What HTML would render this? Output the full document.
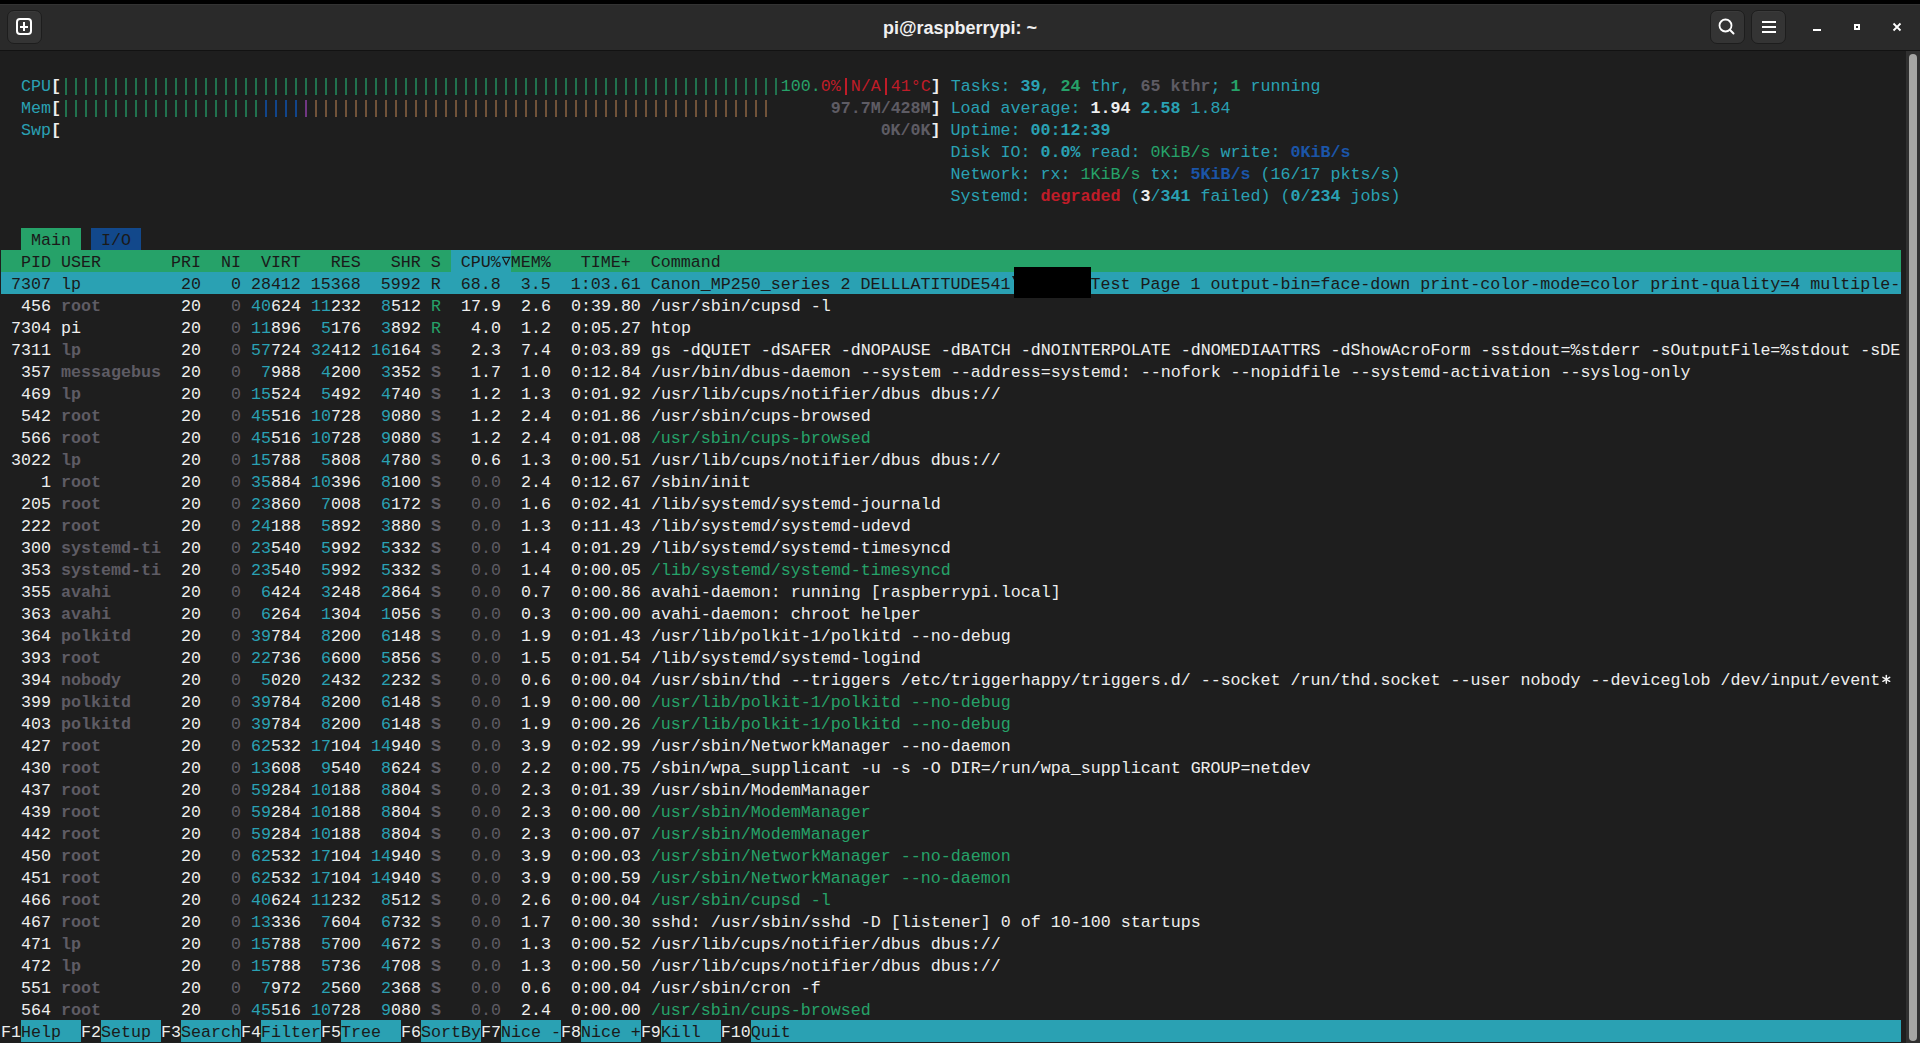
<!DOCTYPE html>
<html><head><meta charset="utf-8">
<style>
html,body{margin:0;padding:0;}
body{width:1920px;height:1043px;background:#1e1e1e;position:relative;overflow:hidden;font-family:"Liberation Mono",monospace;}
#topline{position:absolute;left:0;top:0;width:1920px;height:4px;background:#000;}
#titlebar{position:absolute;left:0;top:4px;width:1920px;height:46px;background:#2a2a2a;box-shadow:inset 0 1px 0 #333;}
#titlesep{position:absolute;left:0;top:50px;width:1920px;height:1px;background:#121212;}
.btn{position:absolute;top:10px;width:33px;height:32px;border-radius:7px;background:#343434;border:1px solid #1d1d1d;box-shadow:inset 0 1px 0 #3a3a3a;}
#title{position:absolute;left:0;top:5px;width:1920px;height:46px;line-height:46px;text-align:center;color:#f0f0f0;font-family:"Liberation Sans",sans-serif;font-weight:bold;font-size:18px;}
#sbtrack{position:absolute;left:1906px;top:51px;width:14px;height:992px;background:#303030;}
#sbthumb{position:absolute;left:1909px;top:54px;width:8px;height:987px;border-radius:4px;background:#a5a5a3;}
.bg{position:absolute;height:22px;}
.bar{position:absolute;width:2px;height:17px;}
.r{position:absolute;left:1px;height:22px;line-height:22px;font-size:16.667px;white-space:pre;}
#redact{position:absolute;left:1014px;top:267px;width:77px;height:31px;background:#000;}
</style></head><body>
<div id="topline"></div>
<div id="titlebar"></div>
<div id="titlesep"></div>
<div class="btn" style="left:7px"></div>
<svg style="position:absolute;left:0;top:0" width="60" height="50">
 <rect x="17" y="19" width="14" height="15" rx="3" ry="3" fill="none" stroke="#ffffff" stroke-width="2"/>
 <rect x="20" y="26" width="8" height="2" fill="#fff"/>
 <rect x="23" y="22" width="2" height="9" fill="#fff"/>
</svg>
<div id="title">pi@raspberrypi: ~</div>
<div class="btn" style="left:1710px"></div>
<div class="btn" style="left:1751px"></div>
<svg style="position:absolute;left:1700px;top:0" width="220" height="50">
 <circle cx="25.5" cy="25.5" r="6" fill="none" stroke="#fff" stroke-width="1.8"/>
 <line x1="29.8" y1="29.8" x2="33.5" y2="33.5" stroke="#fff" stroke-width="2" stroke-linecap="round"/>
 <rect x="62" y="21" width="14" height="2" fill="#fff"/>
 <rect x="62" y="26" width="14" height="2" fill="#fff"/>
 <rect x="62" y="31" width="14" height="2" fill="#fff"/>
 <rect x="113" y="29" width="8" height="2" fill="#fff"/>
 <rect x="155" y="25" width="4" height="4" fill="none" stroke="#fff" stroke-width="2"/>
 <path d="M193.5 23.5 L200.5 30.5 M200.5 23.5 L193.5 30.5" stroke="#fff" stroke-width="1.8"/>
</svg>
<div id="sbtrack"></div>
<div id="sbthumb"></div>
<div class="bg" style="left:21px;top:228px;width:60px;background:#26a269"></div>
<div class="bg" style="left:91px;top:228px;width:50px;background:#12488b"></div>
<div class="bg" style="left:1px;top:250px;width:1900px;background:#26a269"></div>
<div class="bg" style="left:451px;top:250px;width:60px;background:#2aa1b3"></div>
<div class="bg" style="left:1px;top:272px;width:1900px;background:#2aa1b3"></div>
<div class="bg" style="left:21px;top:1020px;width:60px;background:#2aa1b3"></div>
<div class="bg" style="left:101px;top:1020px;width:60px;background:#2aa1b3"></div>
<div class="bg" style="left:181px;top:1020px;width:60px;background:#2aa1b3"></div>
<div class="bg" style="left:261px;top:1020px;width:60px;background:#2aa1b3"></div>
<div class="bg" style="left:341px;top:1020px;width:60px;background:#2aa1b3"></div>
<div class="bg" style="left:421px;top:1020px;width:60px;background:#2aa1b3"></div>
<div class="bg" style="left:501px;top:1020px;width:60px;background:#2aa1b3"></div>
<div class="bg" style="left:581px;top:1020px;width:60px;background:#2aa1b3"></div>
<div class="bg" style="left:661px;top:1020px;width:60px;background:#2aa1b3"></div>
<div class="bg" style="left:751px;top:1020px;width:1150px;background:#2aa1b3"></div>
<div class="bar" style="left:65px;top:78px;background:#21724e"></div>
<div class="bar" style="left:75px;top:78px;background:#21724e"></div>
<div class="bar" style="left:85px;top:78px;background:#21724e"></div>
<div class="bar" style="left:95px;top:78px;background:#21724e"></div>
<div class="bar" style="left:105px;top:78px;background:#21724e"></div>
<div class="bar" style="left:115px;top:78px;background:#21724e"></div>
<div class="bar" style="left:125px;top:78px;background:#21724e"></div>
<div class="bar" style="left:135px;top:78px;background:#21724e"></div>
<div class="bar" style="left:145px;top:78px;background:#21724e"></div>
<div class="bar" style="left:155px;top:78px;background:#21724e"></div>
<div class="bar" style="left:165px;top:78px;background:#21724e"></div>
<div class="bar" style="left:175px;top:78px;background:#21724e"></div>
<div class="bar" style="left:185px;top:78px;background:#21724e"></div>
<div class="bar" style="left:195px;top:78px;background:#21724e"></div>
<div class="bar" style="left:205px;top:78px;background:#21724e"></div>
<div class="bar" style="left:215px;top:78px;background:#21724e"></div>
<div class="bar" style="left:225px;top:78px;background:#21724e"></div>
<div class="bar" style="left:235px;top:78px;background:#21724e"></div>
<div class="bar" style="left:245px;top:78px;background:#21724e"></div>
<div class="bar" style="left:255px;top:78px;background:#21724e"></div>
<div class="bar" style="left:265px;top:78px;background:#21724e"></div>
<div class="bar" style="left:275px;top:78px;background:#21724e"></div>
<div class="bar" style="left:285px;top:78px;background:#21724e"></div>
<div class="bar" style="left:295px;top:78px;background:#21724e"></div>
<div class="bar" style="left:305px;top:78px;background:#21724e"></div>
<div class="bar" style="left:315px;top:78px;background:#21724e"></div>
<div class="bar" style="left:325px;top:78px;background:#21724e"></div>
<div class="bar" style="left:335px;top:78px;background:#21724e"></div>
<div class="bar" style="left:345px;top:78px;background:#21724e"></div>
<div class="bar" style="left:355px;top:78px;background:#21724e"></div>
<div class="bar" style="left:365px;top:78px;background:#21724e"></div>
<div class="bar" style="left:375px;top:78px;background:#21724e"></div>
<div class="bar" style="left:385px;top:78px;background:#21724e"></div>
<div class="bar" style="left:395px;top:78px;background:#21724e"></div>
<div class="bar" style="left:405px;top:78px;background:#21724e"></div>
<div class="bar" style="left:415px;top:78px;background:#21724e"></div>
<div class="bar" style="left:425px;top:78px;background:#21724e"></div>
<div class="bar" style="left:435px;top:78px;background:#21724e"></div>
<div class="bar" style="left:445px;top:78px;background:#21724e"></div>
<div class="bar" style="left:455px;top:78px;background:#21724e"></div>
<div class="bar" style="left:465px;top:78px;background:#21724e"></div>
<div class="bar" style="left:475px;top:78px;background:#21724e"></div>
<div class="bar" style="left:485px;top:78px;background:#21724e"></div>
<div class="bar" style="left:495px;top:78px;background:#21724e"></div>
<div class="bar" style="left:505px;top:78px;background:#21724e"></div>
<div class="bar" style="left:515px;top:78px;background:#21724e"></div>
<div class="bar" style="left:525px;top:78px;background:#21724e"></div>
<div class="bar" style="left:535px;top:78px;background:#21724e"></div>
<div class="bar" style="left:545px;top:78px;background:#21724e"></div>
<div class="bar" style="left:555px;top:78px;background:#21724e"></div>
<div class="bar" style="left:565px;top:78px;background:#21724e"></div>
<div class="bar" style="left:575px;top:78px;background:#21724e"></div>
<div class="bar" style="left:585px;top:78px;background:#21724e"></div>
<div class="bar" style="left:595px;top:78px;background:#21724e"></div>
<div class="bar" style="left:605px;top:78px;background:#21724e"></div>
<div class="bar" style="left:615px;top:78px;background:#21724e"></div>
<div class="bar" style="left:625px;top:78px;background:#21724e"></div>
<div class="bar" style="left:635px;top:78px;background:#21724e"></div>
<div class="bar" style="left:645px;top:78px;background:#21724e"></div>
<div class="bar" style="left:655px;top:78px;background:#21724e"></div>
<div class="bar" style="left:665px;top:78px;background:#21724e"></div>
<div class="bar" style="left:675px;top:78px;background:#21724e"></div>
<div class="bar" style="left:685px;top:78px;background:#21724e"></div>
<div class="bar" style="left:695px;top:78px;background:#21724e"></div>
<div class="bar" style="left:705px;top:78px;background:#21724e"></div>
<div class="bar" style="left:715px;top:78px;background:#21724e"></div>
<div class="bar" style="left:725px;top:78px;background:#21724e"></div>
<div class="bar" style="left:735px;top:78px;background:#21724e"></div>
<div class="bar" style="left:745px;top:78px;background:#21724e"></div>
<div class="bar" style="left:755px;top:78px;background:#21724e"></div>
<div class="bar" style="left:765px;top:78px;background:#21724e"></div>
<div class="bar" style="left:775px;top:78px;background:#21724e"></div>
<div class="bar" style="left:845px;top:78px;background:#c01c28"></div>
<div class="bar" style="left:885px;top:78px;background:#c01c28"></div>
<div class="bar" style="left:65px;top:100px;background:#21724e"></div>
<div class="bar" style="left:75px;top:100px;background:#21724e"></div>
<div class="bar" style="left:85px;top:100px;background:#21724e"></div>
<div class="bar" style="left:95px;top:100px;background:#21724e"></div>
<div class="bar" style="left:105px;top:100px;background:#21724e"></div>
<div class="bar" style="left:115px;top:100px;background:#21724e"></div>
<div class="bar" style="left:125px;top:100px;background:#21724e"></div>
<div class="bar" style="left:135px;top:100px;background:#21724e"></div>
<div class="bar" style="left:145px;top:100px;background:#21724e"></div>
<div class="bar" style="left:155px;top:100px;background:#21724e"></div>
<div class="bar" style="left:165px;top:100px;background:#21724e"></div>
<div class="bar" style="left:175px;top:100px;background:#21724e"></div>
<div class="bar" style="left:185px;top:100px;background:#21724e"></div>
<div class="bar" style="left:195px;top:100px;background:#21724e"></div>
<div class="bar" style="left:205px;top:100px;background:#21724e"></div>
<div class="bar" style="left:215px;top:100px;background:#21724e"></div>
<div class="bar" style="left:225px;top:100px;background:#21724e"></div>
<div class="bar" style="left:235px;top:100px;background:#21724e"></div>
<div class="bar" style="left:245px;top:100px;background:#21724e"></div>
<div class="bar" style="left:255px;top:100px;background:#21724e"></div>
<div class="bar" style="left:265px;top:100px;background:#12458a"></div>
<div class="bar" style="left:275px;top:100px;background:#12458a"></div>
<div class="bar" style="left:285px;top:100px;background:#12458a"></div>
<div class="bar" style="left:295px;top:100px;background:#12458a"></div>
<div class="bar" style="left:305px;top:100px;background:#713683"></div>
<div class="bar" style="left:315px;top:100px;background:#715339"></div>
<div class="bar" style="left:325px;top:100px;background:#715339"></div>
<div class="bar" style="left:335px;top:100px;background:#715339"></div>
<div class="bar" style="left:345px;top:100px;background:#715339"></div>
<div class="bar" style="left:355px;top:100px;background:#715339"></div>
<div class="bar" style="left:365px;top:100px;background:#715339"></div>
<div class="bar" style="left:375px;top:100px;background:#715339"></div>
<div class="bar" style="left:385px;top:100px;background:#715339"></div>
<div class="bar" style="left:395px;top:100px;background:#715339"></div>
<div class="bar" style="left:405px;top:100px;background:#715339"></div>
<div class="bar" style="left:415px;top:100px;background:#715339"></div>
<div class="bar" style="left:425px;top:100px;background:#715339"></div>
<div class="bar" style="left:435px;top:100px;background:#715339"></div>
<div class="bar" style="left:445px;top:100px;background:#715339"></div>
<div class="bar" style="left:455px;top:100px;background:#715339"></div>
<div class="bar" style="left:465px;top:100px;background:#715339"></div>
<div class="bar" style="left:475px;top:100px;background:#715339"></div>
<div class="bar" style="left:485px;top:100px;background:#715339"></div>
<div class="bar" style="left:495px;top:100px;background:#715339"></div>
<div class="bar" style="left:505px;top:100px;background:#715339"></div>
<div class="bar" style="left:515px;top:100px;background:#715339"></div>
<div class="bar" style="left:525px;top:100px;background:#715339"></div>
<div class="bar" style="left:535px;top:100px;background:#715339"></div>
<div class="bar" style="left:545px;top:100px;background:#715339"></div>
<div class="bar" style="left:555px;top:100px;background:#715339"></div>
<div class="bar" style="left:565px;top:100px;background:#715339"></div>
<div class="bar" style="left:575px;top:100px;background:#715339"></div>
<div class="bar" style="left:585px;top:100px;background:#715339"></div>
<div class="bar" style="left:595px;top:100px;background:#715339"></div>
<div class="bar" style="left:605px;top:100px;background:#715339"></div>
<div class="bar" style="left:615px;top:100px;background:#715339"></div>
<div class="bar" style="left:625px;top:100px;background:#715339"></div>
<div class="bar" style="left:635px;top:100px;background:#715339"></div>
<div class="bar" style="left:645px;top:100px;background:#715339"></div>
<div class="bar" style="left:655px;top:100px;background:#715339"></div>
<div class="bar" style="left:665px;top:100px;background:#715339"></div>
<div class="bar" style="left:675px;top:100px;background:#715339"></div>
<div class="bar" style="left:685px;top:100px;background:#715339"></div>
<div class="bar" style="left:695px;top:100px;background:#715339"></div>
<div class="bar" style="left:705px;top:100px;background:#715339"></div>
<div class="bar" style="left:715px;top:100px;background:#715339"></div>
<div class="bar" style="left:725px;top:100px;background:#715339"></div>
<div class="bar" style="left:735px;top:100px;background:#715339"></div>
<div class="bar" style="left:745px;top:100px;background:#715339"></div>
<div class="bar" style="left:755px;top:100px;background:#715339"></div>
<div class="bar" style="left:765px;top:100px;background:#715339"></div>
<div class="r" style="top:76px">  <span style="color:#2aa1b3">CPU</span><span style="color:#eeeeee;font-weight:bold">[</span>                                                                        <span style="color:#26a269">100.</span><span style="color:#c01c28">0%</span> <span style="color:#c01c28">N/A</span> <span style="color:#c01c28">41°C</span><span style="color:#eeeeee;font-weight:bold">]</span> <span style="color:#2aa1b3">Tasks: </span><span style="color:#2aa1b3;font-weight:bold">39</span><span style="color:#2aa1b3">, </span><span style="color:#26a269;font-weight:bold">24</span><span style="color:#2aa1b3"> thr, </span><span style="color:#5e5c64;font-weight:bold">65</span><span style="color:#2aa1b3"> </span><span style="color:#5e5c64;font-weight:bold">kthr</span><span style="color:#2aa1b3">; </span><span style="color:#26a269;font-weight:bold">1</span><span style="color:#2aa1b3"> running</span></div>
<div class="r" style="top:98px">  <span style="color:#2aa1b3">Mem</span><span style="color:#eeeeee;font-weight:bold">[</span>                                                                             <span style="color:#5e5c64;font-weight:bold">97.7M/428M</span><span style="color:#eeeeee;font-weight:bold">]</span> <span style="color:#2aa1b3">Load average: </span><span style="color:#eeeeee;font-weight:bold">1.94</span><span style="color:#2aa1b3"> </span><span style="color:#2aa1b3;font-weight:bold">2.58</span><span style="color:#2aa1b3"> 1.84</span></div>
<div class="r" style="top:120px">  <span style="color:#2aa1b3">Swp</span><span style="color:#eeeeee;font-weight:bold">[</span>                                                                                  <span style="color:#5e5c64;font-weight:bold">0K/0K</span><span style="color:#eeeeee;font-weight:bold">]</span> <span style="color:#2aa1b3">Uptime: </span><span style="color:#2aa1b3;font-weight:bold">00:12:39</span></div>
<div class="r" style="top:142px">                                                                                               <span style="color:#2aa1b3">Disk IO: </span><span style="color:#2aa1b3;font-weight:bold">0.0%</span><span style="color:#2aa1b3"> read: </span><span style="color:#26a269">0KiB/s</span><span style="color:#2aa1b3"> write: </span><span style="color:#1b55a8;font-weight:bold">0KiB/s</span></div>
<div class="r" style="top:164px">                                                                                               <span style="color:#2aa1b3">Network: rx: </span><span style="color:#26a269">1KiB/s</span><span style="color:#2aa1b3"> tx: </span><span style="color:#1b55a8;font-weight:bold">5KiB/s</span><span style="color:#2aa1b3"> (16/17 pkts/s)</span></div>
<div class="r" style="top:186px">                                                                                               <span style="color:#2aa1b3">Systemd: </span><span style="color:#c01c28;font-weight:bold">degraded</span><span style="color:#2aa1b3"> (</span><span style="color:#eeeeee;font-weight:bold">3</span><span style="color:#2aa1b3">/</span><span style="color:#2aa1b3;font-weight:bold">341</span><span style="color:#2aa1b3"> failed) (</span><span style="color:#2aa1b3;font-weight:bold">0</span><span style="color:#2aa1b3">/</span><span style="color:#2aa1b3;font-weight:bold">234</span><span style="color:#2aa1b3"> jobs)</span></div>
<div class="r" style="top:230px">   <span style="color:#1a1a1a">Main</span>   <span style="color:#1a1a1a">I/O</span></div>
<div class="r" style="top:252px"><span style="color:#1a1a1a">  PID USER       PRI  NI  VIRT   RES   SHR S  CPU%</span> <span style="color:#1a1a1a">MEM%   TIME+  Command</span></div>
<div class="r" style="top:274px"><span style="color:#1a1a1a"> 7307 lp          20   0 28412 15368  5992 R  68.8  3.5  1:03.61 Canon_MP250_series 2 DELLLATITUDE541        Test Page 1 output-bin=face-down print-color-mode=color print-quality=4 multiple-</span></div>
<div class="r" style="top:296px"><span style="color:#eeeeee">  456</span> <span style="color:#5e5c64;font-weight:bold">root</span>       <span style="color:#eeeeee"> 20</span> <span style="color:#5e5c64">  0</span> <span style="color:#2aa1b3">40</span><span style="color:#eeeeee">624</span> <span style="color:#2aa1b3">11</span><span style="color:#eeeeee">232</span>  <span style="color:#2aa1b3">8</span><span style="color:#eeeeee">512</span> <span style="color:#26a269">R</span> <span style="color:#eeeeee"> 17.9</span> <span style="color:#eeeeee"> 2.6</span> <span style="color:#eeeeee"> 0:39.80</span> <span style="color:#eeeeee">/usr/sbin/cupsd -l</span></div>
<div class="r" style="top:318px"><span style="color:#eeeeee"> 7304</span> <span style="color:#eeeeee">pi</span>         <span style="color:#eeeeee"> 20</span> <span style="color:#5e5c64">  0</span> <span style="color:#2aa1b3">11</span><span style="color:#eeeeee">896</span>  <span style="color:#2aa1b3">5</span><span style="color:#eeeeee">176</span>  <span style="color:#2aa1b3">3</span><span style="color:#eeeeee">892</span> <span style="color:#26a269">R</span> <span style="color:#eeeeee">  4.0</span> <span style="color:#eeeeee"> 1.2</span> <span style="color:#eeeeee"> 0:05.27</span> <span style="color:#eeeeee">htop</span></div>
<div class="r" style="top:340px"><span style="color:#eeeeee"> 7311</span> <span style="color:#5e5c64;font-weight:bold">lp</span>         <span style="color:#eeeeee"> 20</span> <span style="color:#5e5c64">  0</span> <span style="color:#2aa1b3">57</span><span style="color:#eeeeee">724</span> <span style="color:#2aa1b3">32</span><span style="color:#eeeeee">412</span> <span style="color:#2aa1b3">16</span><span style="color:#eeeeee">164</span> <span style="color:#5e5c64;font-weight:bold">S</span> <span style="color:#eeeeee">  2.3</span> <span style="color:#eeeeee"> 7.4</span> <span style="color:#eeeeee"> 0:03.89</span> <span style="color:#eeeeee">gs -dQUIET -dSAFER -dNOPAUSE -dBATCH -dNOINTERPOLATE -dNOMEDIAATTRS -dShowAcroForm -sstdout=%stderr -sOutputFile=%stdout -sDE</span></div>
<div class="r" style="top:362px"><span style="color:#eeeeee">  357</span> <span style="color:#5e5c64;font-weight:bold">messagebus</span> <span style="color:#eeeeee"> 20</span> <span style="color:#5e5c64">  0</span>  <span style="color:#2aa1b3">7</span><span style="color:#eeeeee">988</span>  <span style="color:#2aa1b3">4</span><span style="color:#eeeeee">200</span>  <span style="color:#2aa1b3">3</span><span style="color:#eeeeee">352</span> <span style="color:#5e5c64;font-weight:bold">S</span> <span style="color:#eeeeee">  1.7</span> <span style="color:#eeeeee"> 1.0</span> <span style="color:#eeeeee"> 0:12.84</span> <span style="color:#eeeeee">/usr/bin/dbus-daemon --system --address=systemd: --nofork --nopidfile --systemd-activation --syslog-only</span></div>
<div class="r" style="top:384px"><span style="color:#eeeeee">  469</span> <span style="color:#5e5c64;font-weight:bold">lp</span>         <span style="color:#eeeeee"> 20</span> <span style="color:#5e5c64">  0</span> <span style="color:#2aa1b3">15</span><span style="color:#eeeeee">524</span>  <span style="color:#2aa1b3">5</span><span style="color:#eeeeee">492</span>  <span style="color:#2aa1b3">4</span><span style="color:#eeeeee">740</span> <span style="color:#5e5c64;font-weight:bold">S</span> <span style="color:#eeeeee">  1.2</span> <span style="color:#eeeeee"> 1.3</span> <span style="color:#eeeeee"> 0:01.92</span> <span style="color:#eeeeee">/usr/lib/cups/notifier/dbus dbus://</span></div>
<div class="r" style="top:406px"><span style="color:#eeeeee">  542</span> <span style="color:#5e5c64;font-weight:bold">root</span>       <span style="color:#eeeeee"> 20</span> <span style="color:#5e5c64">  0</span> <span style="color:#2aa1b3">45</span><span style="color:#eeeeee">516</span> <span style="color:#2aa1b3">10</span><span style="color:#eeeeee">728</span>  <span style="color:#2aa1b3">9</span><span style="color:#eeeeee">080</span> <span style="color:#5e5c64;font-weight:bold">S</span> <span style="color:#eeeeee">  1.2</span> <span style="color:#eeeeee"> 2.4</span> <span style="color:#eeeeee"> 0:01.86</span> <span style="color:#eeeeee">/usr/sbin/cups-browsed</span></div>
<div class="r" style="top:428px"><span style="color:#eeeeee">  566</span> <span style="color:#5e5c64;font-weight:bold">root</span>       <span style="color:#eeeeee"> 20</span> <span style="color:#5e5c64">  0</span> <span style="color:#2aa1b3">45</span><span style="color:#eeeeee">516</span> <span style="color:#2aa1b3">10</span><span style="color:#eeeeee">728</span>  <span style="color:#2aa1b3">9</span><span style="color:#eeeeee">080</span> <span style="color:#5e5c64;font-weight:bold">S</span> <span style="color:#eeeeee">  1.2</span> <span style="color:#eeeeee"> 2.4</span> <span style="color:#eeeeee"> 0:01.08</span> <span style="color:#26a269">/usr/sbin/cups-browsed</span></div>
<div class="r" style="top:450px"><span style="color:#eeeeee"> 3022</span> <span style="color:#5e5c64;font-weight:bold">lp</span>         <span style="color:#eeeeee"> 20</span> <span style="color:#5e5c64">  0</span> <span style="color:#2aa1b3">15</span><span style="color:#eeeeee">788</span>  <span style="color:#2aa1b3">5</span><span style="color:#eeeeee">808</span>  <span style="color:#2aa1b3">4</span><span style="color:#eeeeee">780</span> <span style="color:#5e5c64;font-weight:bold">S</span> <span style="color:#eeeeee">  0.6</span> <span style="color:#eeeeee"> 1.3</span> <span style="color:#eeeeee"> 0:00.51</span> <span style="color:#eeeeee">/usr/lib/cups/notifier/dbus dbus://</span></div>
<div class="r" style="top:472px"><span style="color:#eeeeee">    1</span> <span style="color:#5e5c64;font-weight:bold">root</span>       <span style="color:#eeeeee"> 20</span> <span style="color:#5e5c64">  0</span> <span style="color:#2aa1b3">35</span><span style="color:#eeeeee">884</span> <span style="color:#2aa1b3">10</span><span style="color:#eeeeee">396</span>  <span style="color:#2aa1b3">8</span><span style="color:#eeeeee">100</span> <span style="color:#5e5c64;font-weight:bold">S</span> <span style="color:#5e5c64">  0.0</span> <span style="color:#eeeeee"> 2.4</span> <span style="color:#eeeeee"> 0:12.67</span> <span style="color:#eeeeee">/sbin/init</span></div>
<div class="r" style="top:494px"><span style="color:#eeeeee">  205</span> <span style="color:#5e5c64;font-weight:bold">root</span>       <span style="color:#eeeeee"> 20</span> <span style="color:#5e5c64">  0</span> <span style="color:#2aa1b3">23</span><span style="color:#eeeeee">860</span>  <span style="color:#2aa1b3">7</span><span style="color:#eeeeee">008</span>  <span style="color:#2aa1b3">6</span><span style="color:#eeeeee">172</span> <span style="color:#5e5c64;font-weight:bold">S</span> <span style="color:#5e5c64">  0.0</span> <span style="color:#eeeeee"> 1.6</span> <span style="color:#eeeeee"> 0:02.41</span> <span style="color:#eeeeee">/lib/systemd/systemd-journald</span></div>
<div class="r" style="top:516px"><span style="color:#eeeeee">  222</span> <span style="color:#5e5c64;font-weight:bold">root</span>       <span style="color:#eeeeee"> 20</span> <span style="color:#5e5c64">  0</span> <span style="color:#2aa1b3">24</span><span style="color:#eeeeee">188</span>  <span style="color:#2aa1b3">5</span><span style="color:#eeeeee">892</span>  <span style="color:#2aa1b3">3</span><span style="color:#eeeeee">880</span> <span style="color:#5e5c64;font-weight:bold">S</span> <span style="color:#5e5c64">  0.0</span> <span style="color:#eeeeee"> 1.3</span> <span style="color:#eeeeee"> 0:11.43</span> <span style="color:#eeeeee">/lib/systemd/systemd-udevd</span></div>
<div class="r" style="top:538px"><span style="color:#eeeeee">  300</span> <span style="color:#5e5c64;font-weight:bold">systemd-ti</span> <span style="color:#eeeeee"> 20</span> <span style="color:#5e5c64">  0</span> <span style="color:#2aa1b3">23</span><span style="color:#eeeeee">540</span>  <span style="color:#2aa1b3">5</span><span style="color:#eeeeee">992</span>  <span style="color:#2aa1b3">5</span><span style="color:#eeeeee">332</span> <span style="color:#5e5c64;font-weight:bold">S</span> <span style="color:#5e5c64">  0.0</span> <span style="color:#eeeeee"> 1.4</span> <span style="color:#eeeeee"> 0:01.29</span> <span style="color:#eeeeee">/lib/systemd/systemd-timesyncd</span></div>
<div class="r" style="top:560px"><span style="color:#eeeeee">  353</span> <span style="color:#5e5c64;font-weight:bold">systemd-ti</span> <span style="color:#eeeeee"> 20</span> <span style="color:#5e5c64">  0</span> <span style="color:#2aa1b3">23</span><span style="color:#eeeeee">540</span>  <span style="color:#2aa1b3">5</span><span style="color:#eeeeee">992</span>  <span style="color:#2aa1b3">5</span><span style="color:#eeeeee">332</span> <span style="color:#5e5c64;font-weight:bold">S</span> <span style="color:#5e5c64">  0.0</span> <span style="color:#eeeeee"> 1.4</span> <span style="color:#eeeeee"> 0:00.05</span> <span style="color:#26a269">/lib/systemd/systemd-timesyncd</span></div>
<div class="r" style="top:582px"><span style="color:#eeeeee">  355</span> <span style="color:#5e5c64;font-weight:bold">avahi</span>      <span style="color:#eeeeee"> 20</span> <span style="color:#5e5c64">  0</span>  <span style="color:#2aa1b3">6</span><span style="color:#eeeeee">424</span>  <span style="color:#2aa1b3">3</span><span style="color:#eeeeee">248</span>  <span style="color:#2aa1b3">2</span><span style="color:#eeeeee">864</span> <span style="color:#5e5c64;font-weight:bold">S</span> <span style="color:#5e5c64">  0.0</span> <span style="color:#eeeeee"> 0.7</span> <span style="color:#eeeeee"> 0:00.86</span> <span style="color:#eeeeee">avahi-daemon: running [raspberrypi.local]</span></div>
<div class="r" style="top:604px"><span style="color:#eeeeee">  363</span> <span style="color:#5e5c64;font-weight:bold">avahi</span>      <span style="color:#eeeeee"> 20</span> <span style="color:#5e5c64">  0</span>  <span style="color:#2aa1b3">6</span><span style="color:#eeeeee">264</span>  <span style="color:#2aa1b3">1</span><span style="color:#eeeeee">304</span>  <span style="color:#2aa1b3">1</span><span style="color:#eeeeee">056</span> <span style="color:#5e5c64;font-weight:bold">S</span> <span style="color:#5e5c64">  0.0</span> <span style="color:#eeeeee"> 0.3</span> <span style="color:#eeeeee"> 0:00.00</span> <span style="color:#eeeeee">avahi-daemon: chroot helper</span></div>
<div class="r" style="top:626px"><span style="color:#eeeeee">  364</span> <span style="color:#5e5c64;font-weight:bold">polkitd</span>    <span style="color:#eeeeee"> 20</span> <span style="color:#5e5c64">  0</span> <span style="color:#2aa1b3">39</span><span style="color:#eeeeee">784</span>  <span style="color:#2aa1b3">8</span><span style="color:#eeeeee">200</span>  <span style="color:#2aa1b3">6</span><span style="color:#eeeeee">148</span> <span style="color:#5e5c64;font-weight:bold">S</span> <span style="color:#5e5c64">  0.0</span> <span style="color:#eeeeee"> 1.9</span> <span style="color:#eeeeee"> 0:01.43</span> <span style="color:#eeeeee">/usr/lib/polkit-1/polkitd --no-debug</span></div>
<div class="r" style="top:648px"><span style="color:#eeeeee">  393</span> <span style="color:#5e5c64;font-weight:bold">root</span>       <span style="color:#eeeeee"> 20</span> <span style="color:#5e5c64">  0</span> <span style="color:#2aa1b3">22</span><span style="color:#eeeeee">736</span>  <span style="color:#2aa1b3">6</span><span style="color:#eeeeee">600</span>  <span style="color:#2aa1b3">5</span><span style="color:#eeeeee">856</span> <span style="color:#5e5c64;font-weight:bold">S</span> <span style="color:#5e5c64">  0.0</span> <span style="color:#eeeeee"> 1.5</span> <span style="color:#eeeeee"> 0:01.54</span> <span style="color:#eeeeee">/lib/systemd/systemd-logind</span></div>
<div class="r" style="top:670px"><span style="color:#eeeeee">  394</span> <span style="color:#5e5c64;font-weight:bold">nobody</span>     <span style="color:#eeeeee"> 20</span> <span style="color:#5e5c64">  0</span>  <span style="color:#2aa1b3">5</span><span style="color:#eeeeee">020</span>  <span style="color:#2aa1b3">2</span><span style="color:#eeeeee">432</span>  <span style="color:#2aa1b3">2</span><span style="color:#eeeeee">232</span> <span style="color:#5e5c64;font-weight:bold">S</span> <span style="color:#5e5c64">  0.0</span> <span style="color:#eeeeee"> 0.6</span> <span style="color:#eeeeee"> 0:00.04</span> <span style="color:#eeeeee">/usr/sbin/thd --triggers /etc/triggerhappy/triggers.d/ --socket /run/thd.socket --user nobody --deviceglob /dev/input/event</span> </div>
<div class="r" style="top:692px"><span style="color:#eeeeee">  399</span> <span style="color:#5e5c64;font-weight:bold">polkitd</span>    <span style="color:#eeeeee"> 20</span> <span style="color:#5e5c64">  0</span> <span style="color:#2aa1b3">39</span><span style="color:#eeeeee">784</span>  <span style="color:#2aa1b3">8</span><span style="color:#eeeeee">200</span>  <span style="color:#2aa1b3">6</span><span style="color:#eeeeee">148</span> <span style="color:#5e5c64;font-weight:bold">S</span> <span style="color:#5e5c64">  0.0</span> <span style="color:#eeeeee"> 1.9</span> <span style="color:#eeeeee"> 0:00.00</span> <span style="color:#26a269">/usr/lib/polkit-1/polkitd --no-debug</span></div>
<div class="r" style="top:714px"><span style="color:#eeeeee">  403</span> <span style="color:#5e5c64;font-weight:bold">polkitd</span>    <span style="color:#eeeeee"> 20</span> <span style="color:#5e5c64">  0</span> <span style="color:#2aa1b3">39</span><span style="color:#eeeeee">784</span>  <span style="color:#2aa1b3">8</span><span style="color:#eeeeee">200</span>  <span style="color:#2aa1b3">6</span><span style="color:#eeeeee">148</span> <span style="color:#5e5c64;font-weight:bold">S</span> <span style="color:#5e5c64">  0.0</span> <span style="color:#eeeeee"> 1.9</span> <span style="color:#eeeeee"> 0:00.26</span> <span style="color:#26a269">/usr/lib/polkit-1/polkitd --no-debug</span></div>
<div class="r" style="top:736px"><span style="color:#eeeeee">  427</span> <span style="color:#5e5c64;font-weight:bold">root</span>       <span style="color:#eeeeee"> 20</span> <span style="color:#5e5c64">  0</span> <span style="color:#2aa1b3">62</span><span style="color:#eeeeee">532</span> <span style="color:#2aa1b3">17</span><span style="color:#eeeeee">104</span> <span style="color:#2aa1b3">14</span><span style="color:#eeeeee">940</span> <span style="color:#5e5c64;font-weight:bold">S</span> <span style="color:#5e5c64">  0.0</span> <span style="color:#eeeeee"> 3.9</span> <span style="color:#eeeeee"> 0:02.99</span> <span style="color:#eeeeee">/usr/sbin/NetworkManager --no-daemon</span></div>
<div class="r" style="top:758px"><span style="color:#eeeeee">  430</span> <span style="color:#5e5c64;font-weight:bold">root</span>       <span style="color:#eeeeee"> 20</span> <span style="color:#5e5c64">  0</span> <span style="color:#2aa1b3">13</span><span style="color:#eeeeee">608</span>  <span style="color:#2aa1b3">9</span><span style="color:#eeeeee">540</span>  <span style="color:#2aa1b3">8</span><span style="color:#eeeeee">624</span> <span style="color:#5e5c64;font-weight:bold">S</span> <span style="color:#5e5c64">  0.0</span> <span style="color:#eeeeee"> 2.2</span> <span style="color:#eeeeee"> 0:00.75</span> <span style="color:#eeeeee">/sbin/wpa_supplicant -u -s -O DIR=/run/wpa_supplicant GROUP=netdev</span></div>
<div class="r" style="top:780px"><span style="color:#eeeeee">  437</span> <span style="color:#5e5c64;font-weight:bold">root</span>       <span style="color:#eeeeee"> 20</span> <span style="color:#5e5c64">  0</span> <span style="color:#2aa1b3">59</span><span style="color:#eeeeee">284</span> <span style="color:#2aa1b3">10</span><span style="color:#eeeeee">188</span>  <span style="color:#2aa1b3">8</span><span style="color:#eeeeee">804</span> <span style="color:#5e5c64;font-weight:bold">S</span> <span style="color:#5e5c64">  0.0</span> <span style="color:#eeeeee"> 2.3</span> <span style="color:#eeeeee"> 0:01.39</span> <span style="color:#eeeeee">/usr/sbin/ModemManager</span></div>
<div class="r" style="top:802px"><span style="color:#eeeeee">  439</span> <span style="color:#5e5c64;font-weight:bold">root</span>       <span style="color:#eeeeee"> 20</span> <span style="color:#5e5c64">  0</span> <span style="color:#2aa1b3">59</span><span style="color:#eeeeee">284</span> <span style="color:#2aa1b3">10</span><span style="color:#eeeeee">188</span>  <span style="color:#2aa1b3">8</span><span style="color:#eeeeee">804</span> <span style="color:#5e5c64;font-weight:bold">S</span> <span style="color:#5e5c64">  0.0</span> <span style="color:#eeeeee"> 2.3</span> <span style="color:#eeeeee"> 0:00.00</span> <span style="color:#26a269">/usr/sbin/ModemManager</span></div>
<div class="r" style="top:824px"><span style="color:#eeeeee">  442</span> <span style="color:#5e5c64;font-weight:bold">root</span>       <span style="color:#eeeeee"> 20</span> <span style="color:#5e5c64">  0</span> <span style="color:#2aa1b3">59</span><span style="color:#eeeeee">284</span> <span style="color:#2aa1b3">10</span><span style="color:#eeeeee">188</span>  <span style="color:#2aa1b3">8</span><span style="color:#eeeeee">804</span> <span style="color:#5e5c64;font-weight:bold">S</span> <span style="color:#5e5c64">  0.0</span> <span style="color:#eeeeee"> 2.3</span> <span style="color:#eeeeee"> 0:00.07</span> <span style="color:#26a269">/usr/sbin/ModemManager</span></div>
<div class="r" style="top:846px"><span style="color:#eeeeee">  450</span> <span style="color:#5e5c64;font-weight:bold">root</span>       <span style="color:#eeeeee"> 20</span> <span style="color:#5e5c64">  0</span> <span style="color:#2aa1b3">62</span><span style="color:#eeeeee">532</span> <span style="color:#2aa1b3">17</span><span style="color:#eeeeee">104</span> <span style="color:#2aa1b3">14</span><span style="color:#eeeeee">940</span> <span style="color:#5e5c64;font-weight:bold">S</span> <span style="color:#5e5c64">  0.0</span> <span style="color:#eeeeee"> 3.9</span> <span style="color:#eeeeee"> 0:00.03</span> <span style="color:#26a269">/usr/sbin/NetworkManager --no-daemon</span></div>
<div class="r" style="top:868px"><span style="color:#eeeeee">  451</span> <span style="color:#5e5c64;font-weight:bold">root</span>       <span style="color:#eeeeee"> 20</span> <span style="color:#5e5c64">  0</span> <span style="color:#2aa1b3">62</span><span style="color:#eeeeee">532</span> <span style="color:#2aa1b3">17</span><span style="color:#eeeeee">104</span> <span style="color:#2aa1b3">14</span><span style="color:#eeeeee">940</span> <span style="color:#5e5c64;font-weight:bold">S</span> <span style="color:#5e5c64">  0.0</span> <span style="color:#eeeeee"> 3.9</span> <span style="color:#eeeeee"> 0:00.59</span> <span style="color:#26a269">/usr/sbin/NetworkManager --no-daemon</span></div>
<div class="r" style="top:890px"><span style="color:#eeeeee">  466</span> <span style="color:#5e5c64;font-weight:bold">root</span>       <span style="color:#eeeeee"> 20</span> <span style="color:#5e5c64">  0</span> <span style="color:#2aa1b3">40</span><span style="color:#eeeeee">624</span> <span style="color:#2aa1b3">11</span><span style="color:#eeeeee">232</span>  <span style="color:#2aa1b3">8</span><span style="color:#eeeeee">512</span> <span style="color:#5e5c64;font-weight:bold">S</span> <span style="color:#5e5c64">  0.0</span> <span style="color:#eeeeee"> 2.6</span> <span style="color:#eeeeee"> 0:00.04</span> <span style="color:#26a269">/usr/sbin/cupsd -l</span></div>
<div class="r" style="top:912px"><span style="color:#eeeeee">  467</span> <span style="color:#5e5c64;font-weight:bold">root</span>       <span style="color:#eeeeee"> 20</span> <span style="color:#5e5c64">  0</span> <span style="color:#2aa1b3">13</span><span style="color:#eeeeee">336</span>  <span style="color:#2aa1b3">7</span><span style="color:#eeeeee">604</span>  <span style="color:#2aa1b3">6</span><span style="color:#eeeeee">732</span> <span style="color:#5e5c64;font-weight:bold">S</span> <span style="color:#5e5c64">  0.0</span> <span style="color:#eeeeee"> 1.7</span> <span style="color:#eeeeee"> 0:00.30</span> <span style="color:#eeeeee">sshd: /usr/sbin/sshd -D [listener] 0 of 10-100 startups</span></div>
<div class="r" style="top:934px"><span style="color:#eeeeee">  471</span> <span style="color:#5e5c64;font-weight:bold">lp</span>         <span style="color:#eeeeee"> 20</span> <span style="color:#5e5c64">  0</span> <span style="color:#2aa1b3">15</span><span style="color:#eeeeee">788</span>  <span style="color:#2aa1b3">5</span><span style="color:#eeeeee">700</span>  <span style="color:#2aa1b3">4</span><span style="color:#eeeeee">672</span> <span style="color:#5e5c64;font-weight:bold">S</span> <span style="color:#5e5c64">  0.0</span> <span style="color:#eeeeee"> 1.3</span> <span style="color:#eeeeee"> 0:00.52</span> <span style="color:#eeeeee">/usr/lib/cups/notifier/dbus dbus://</span></div>
<div class="r" style="top:956px"><span style="color:#eeeeee">  472</span> <span style="color:#5e5c64;font-weight:bold">lp</span>         <span style="color:#eeeeee"> 20</span> <span style="color:#5e5c64">  0</span> <span style="color:#2aa1b3">15</span><span style="color:#eeeeee">788</span>  <span style="color:#2aa1b3">5</span><span style="color:#eeeeee">736</span>  <span style="color:#2aa1b3">4</span><span style="color:#eeeeee">708</span> <span style="color:#5e5c64;font-weight:bold">S</span> <span style="color:#5e5c64">  0.0</span> <span style="color:#eeeeee"> 1.3</span> <span style="color:#eeeeee"> 0:00.50</span> <span style="color:#eeeeee">/usr/lib/cups/notifier/dbus dbus://</span></div>
<div class="r" style="top:978px"><span style="color:#eeeeee">  551</span> <span style="color:#5e5c64;font-weight:bold">root</span>       <span style="color:#eeeeee"> 20</span> <span style="color:#5e5c64">  0</span>  <span style="color:#2aa1b3">7</span><span style="color:#eeeeee">972</span>  <span style="color:#2aa1b3">2</span><span style="color:#eeeeee">560</span>  <span style="color:#2aa1b3">2</span><span style="color:#eeeeee">368</span> <span style="color:#5e5c64;font-weight:bold">S</span> <span style="color:#5e5c64">  0.0</span> <span style="color:#eeeeee"> 0.6</span> <span style="color:#eeeeee"> 0:00.04</span> <span style="color:#eeeeee">/usr/sbin/cron -f</span></div>
<div class="r" style="top:1000px"><span style="color:#eeeeee">  564</span> <span style="color:#5e5c64;font-weight:bold">root</span>       <span style="color:#eeeeee"> 20</span> <span style="color:#5e5c64">  0</span> <span style="color:#2aa1b3">45</span><span style="color:#eeeeee">516</span> <span style="color:#2aa1b3">10</span><span style="color:#eeeeee">728</span>  <span style="color:#2aa1b3">9</span><span style="color:#eeeeee">080</span> <span style="color:#5e5c64;font-weight:bold">S</span> <span style="color:#5e5c64">  0.0</span> <span style="color:#eeeeee"> 2.4</span> <span style="color:#eeeeee"> 0:00.00</span> <span style="color:#26a269">/usr/sbin/cups-browsed</span></div>
<div class="r" style="top:1022px"><span style="color:#eeeeee">F1</span><span style="color:#1a1a1a">Help  </span><span style="color:#eeeeee">F2</span><span style="color:#1a1a1a">Setup </span><span style="color:#eeeeee">F3</span><span style="color:#1a1a1a">Search</span><span style="color:#eeeeee">F4</span><span style="color:#1a1a1a">Filter</span><span style="color:#eeeeee">F5</span><span style="color:#1a1a1a">Tree  </span><span style="color:#eeeeee">F6</span><span style="color:#1a1a1a">SortBy</span><span style="color:#eeeeee">F7</span><span style="color:#1a1a1a">Nice -</span><span style="color:#eeeeee">F8</span><span style="color:#1a1a1a">Nice +</span><span style="color:#eeeeee">F9</span><span style="color:#1a1a1a">Kill  </span><span style="color:#eeeeee">F10</span><span style="color:#1a1a1a">Quit</span></div>
<svg style="position:absolute;left:0;top:0" width="1920" height="300"><polygon points="502.6,257.4 509.8,257.4 506.2,264.6" fill="none" stroke="#1a1a1a" stroke-width="1.2"/><polygon points="1012,276 1014.5,276 1014.5,281 1013.5,279" fill="#1a1a1a"/></svg>
<svg style="position:absolute;left:1876px;top:668px" width="20" height="22"><g stroke="#f4f4f4" stroke-width="1.5" stroke-linecap="round"><line x1="10.3" y1="7.5" x2="10.3" y2="15.3"/><line x1="6.9" y1="9.4" x2="13.7" y2="13.3"/><line x1="13.7" y1="9.4" x2="6.9" y2="13.3"/></g></svg>
<div id="redact"></div>
</body></html>
